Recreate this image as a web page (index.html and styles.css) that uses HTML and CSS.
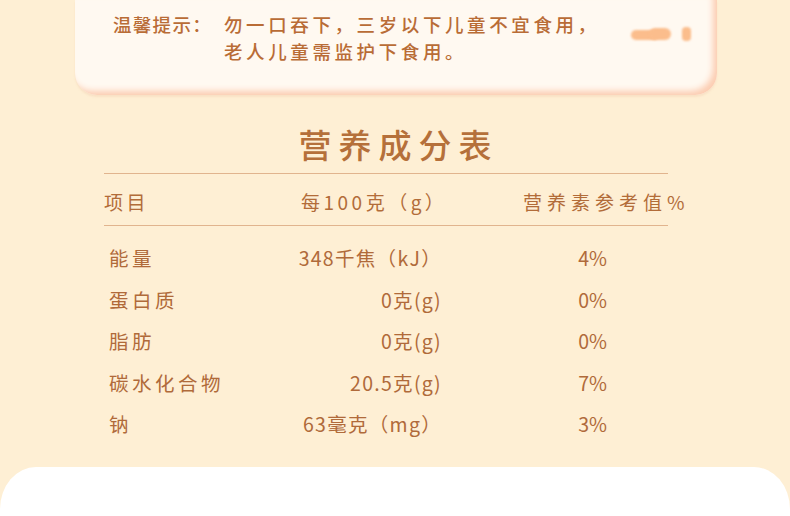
FILE: index.html
```html
<!DOCTYPE html>
<html lang="zh-CN">
<head>
<meta charset="utf-8">
<link rel="stylesheet" href="styles.css">
</head>
<body>
<div class="page">
  <section class="notice">
    <div class="notice-grid">
      <span class="notice-label">温馨提示：</span>
      <span class="notice-text">勿一口吞下，三岁以下儿童不宜食用，<br>老人儿童需监护下食用。</span>
    </div>
    <div class="smudge"><span class="blob-a"></span><span class="blob-c"></span><span class="blob-b"></span></div>
  </section>

  <section class="nutrition">
    <h1 class="title">营养成分表</h1>
    <div class="table">
      <div class="head">
        <span>项目</span>
        <span>每100克（g）</span>
        <span class="head-ref">营养素参考值%</span>
      </div>
      <div class="rows">
        <div class="row"><span class="name">能量</span><span class="num">348千焦（kJ）</span><span class="pct">4%</span></div>
        <div class="row"><span class="name">蛋白质</span><span class="num">0克(g)</span><span class="pct">0%</span></div>
        <div class="row"><span class="name">脂肪</span><span class="num">0克(g)</span><span class="pct">0%</span></div>
        <div class="row"><span class="name">碳水化合物</span><span class="num">20.5克(g)</span><span class="pct">7%</span></div>
        <div class="row"><span class="name">钠</span><span class="num">63毫克（mg）</span><span class="pct">3%</span></div>
      </div>
    </div>
  </section>

  <section class="next-panel"></section>
</div>
</body>
</html>
```

FILE: styles.css
```css
html, body {
  margin: 0;
  padding: 0;
  background: #feefd4;
}
.page {
  width: 790px;
  height: 516px;
  overflow: hidden;
  display: flex;
  flex-direction: column;
  font-family: "Noto Sans CJK SC", "Noto Sans", sans-serif;
  color: #b36d3a;
}
.notice {
  position: relative;
  margin: 0 73px 0 75px;
  height: 95px;
  box-sizing: border-box;
  padding: 11px 0 0 38px;
  background: #fff9f1;
  border-radius: 0 0 22px 22px;
  box-shadow: inset -5px -5px 6px -1px #fccdb2, 0 2px 2px rgba(240, 200, 170, 0.35);
}
.notice-grid {
  display: grid;
  grid-template-columns: 111px auto;
  font-size: 18.5px;
  font-weight: 500;
  line-height: 27px;
  letter-spacing: 3.6px;
  color: #b96c36;
}
.notice-label {
  letter-spacing: 1.3px;
}
.smudge {
  position: absolute;
  left: 556px;
  top: 26px;
  width: 70px;
  height: 18px;
}
.blob-a {
  position: absolute;
  left: 0;
  top: 4px;
  width: 28px;
  height: 10px;
  border-radius: 5px;
  background: #fbbd8c;
  filter: blur(1.2px);
}
.blob-c {
  position: absolute;
  left: 18px;
  top: 2px;
  width: 22px;
  height: 12px;
  border-radius: 6px;
  background: #fbbd8c;
  filter: blur(1.2px);
}
.blob-b {
  position: absolute;
  left: 51px;
  top: 1px;
  width: 9px;
  height: 14px;
  border-radius: 4px;
  background: #fbbd8c;
  filter: blur(1px);
}
.nutrition {
  display: flex;
  flex-direction: column;
  align-items: center;
}
.title {
  margin: 24px 0 0 0;
  font-size: 33px;
  font-weight: 500;
  line-height: 50px;
  letter-spacing: 7px;
  padding-left: 7px;
  color: #b5703a;
}
.table {
  width: 559px;
  margin-left: -13px;
  margin-top: 4px;
}
.head {
  display: grid;
  grid-template-columns: 197px 222px auto;
  margin-left: -5px;
  border-top: 1px solid #e1b48e;
  border-bottom: 1px solid #e1b48e;
  height: 53px;
  box-sizing: border-box;
  padding-top: 4px;
  align-items: center;
  font-size: 19px;
  letter-spacing: 3.5px;
  color: #b26c39;
  white-space: nowrap;
}
.head-ref {
  letter-spacing: 5px;
}
.rows {
  padding-top: 11px;
}
.row {
  display: grid;
  grid-template-columns: 180px 153px 165px;
  height: 41.5px;
  align-items: center;
  font-size: 19.5px;
  letter-spacing: 3.5px;
  color: #b06a3a;
  white-space: nowrap;
}
.num, .pct {
  text-align: right;
  letter-spacing: 1.3px;
}
.pct {
  letter-spacing: 0;
}
.next-panel {
  margin-top: auto;
  height: 49px;
  background: #ffffff;
  border-radius: 36px 36px 0 0 / 42px 42px 0 0;
}
```
